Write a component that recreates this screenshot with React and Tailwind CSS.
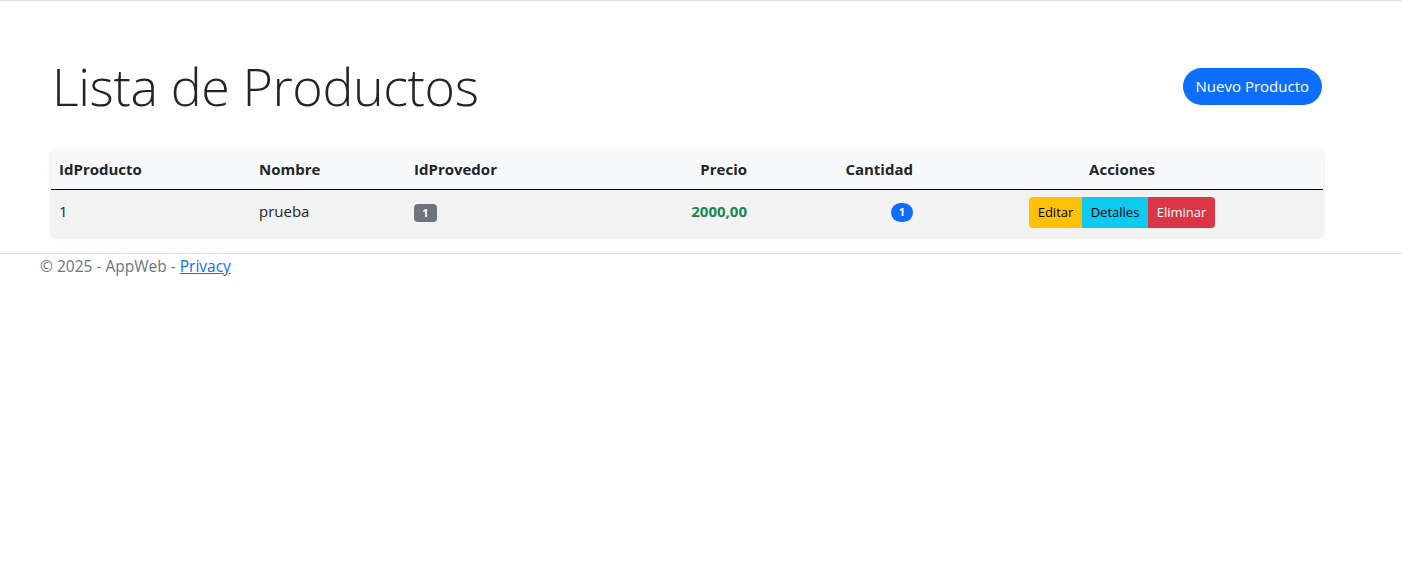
import React from "react";

const productos = [
  { id: 1, nombre: "prueba", idProvedor: 1, precio: "2000,00", cantidad: 1 },
];

const App = () => {
  return (
    <div
      className="min-h-screen bg-white text-[#212529]"
      style={{ fontFamily: '"Open Sans", "Noto Sans", sans-serif' }}
    >
      {/* top navbar edge */}
      <div className="h-px bg-[#dee2e6]" />

      <main className="ml-[51px] w-[1272px] pt-[50px]">
        {/* Header */}
        <div className="flex items-center justify-between pl-px">
          <h1 className="text-[52px] font-light leading-[70px] tracking-[-0.4px]">
            Lista de Productos
          </h1>
          <button className="bg-[#0d6efd] text-white text-[15px] rounded-full h-[37px] px-[13px] mr-px">
            Nuevo Producto
          </button>
        </div>

        {/* Table */}
        <div className="mt-[28px] rounded-md shadow-[0_1px_4px_rgba(0,0,0,0.12)] overflow-hidden">
          <table className="w-full text-left text-[15px] border-collapse">
            <thead className="bg-[#f8f9fa]">
              <tr className="border-b border-black h-[40px]">
                <th className="px-2 w-[200px] font-bold">IdProducto</th>
                <th className="px-2 w-[155px] font-bold">Nombre</th>
                <th className="px-2 w-[190px] font-bold">IdProvedor</th>
                <th className="px-2 w-[159px] font-bold text-right">Precio</th>
                <th className="px-2 w-[166px] font-bold text-right">Cantidad</th>
                <th className="px-2 font-bold text-center">Acciones</th>
              </tr>
            </thead>
            <tbody>
              {productos.map((p) => (
                <tr key={p.id} className="bg-[#f2f2f2] h-[48px]">
                  <td className="px-2 pb-[5px]">{p.id}</td>
                  <td className="px-2 pb-[5px]">{p.nombre}</td>
                  <td className="px-2 pb-[5px]">
                    <span className="inline-flex items-center justify-center w-[23px] h-[18px] rounded-[4px] bg-[#6c757d] text-white text-[11px] font-bold">
                      {p.idProvedor}
                    </span>
                  </td>
                  <td className="px-2 pb-[5px] text-right font-bold text-[#198754]">
                    {p.precio}
                  </td>
                  <td className="px-2 pb-[5px] text-right">
                    <span className="inline-flex items-center justify-center w-[22px] h-[19px] rounded-full bg-[#0d6efd] text-white text-[11px] font-bold">
                      {p.cantidad}
                    </span>
                  </td>
                  <td className="px-2 pb-[2px] text-center">
                    <div className="inline-flex text-[13px] rounded-[4px] overflow-hidden">
                      <button className="bg-[#ffc107] text-black h-[31px] w-[53px]">
                        Editar
                      </button>
                      <button className="bg-[#0dcaf0] text-black h-[31px] w-[66px]">
                        Detalles
                      </button>
                      <button className="bg-[#dc3545] text-white h-[31px] w-[67px]">
                        Eliminar
                      </button>
                    </div>
                  </td>
                </tr>
              ))}
            </tbody>
          </table>
        </div>
      </main>

      {/* Footer */}
      <footer className="mt-[16px] border-t border-[#dee2e6] pl-[40px] text-[15.5px] leading-[24px] text-[#6c757d]">
        © 2025 - AppWeb -{" "}
        <a href="#" className="text-[#0d6efd] underline">
          Privacy
        </a>
      </footer>
    </div>
  );
};

export default App;
